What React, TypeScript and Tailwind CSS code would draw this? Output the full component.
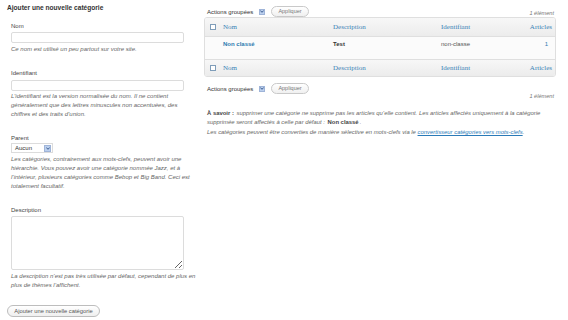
import React from 'react';

const sans = "font-['Liberation_Sans',Arial,sans-serif]";
const serif = "font-['Liberation_Serif','Times_New_Roman',serif]";

function Chevron() {
  return (
    <svg width="4" height="3" viewBox="0 0 4 3" className="block">
      <path d="M0.3 0.5 L2 2.3 L3.7 0.5" fill="none" stroke="#2b4f86" strokeWidth="0.9" />
    </svg>
  );
}

function CheckBox() {
  return <div className="w-[6px] h-[6px] border border-[#7f9db9] bg-white" />;
}

function BulkActions() {
  return (
    <div className="flex items-center">
      <div className="flex items-center w-[62px] h-[10px] pl-[3px] pr-[1px] justify-between">
        <span className="text-[6px] leading-[8px] text-[#333]">Actions groupées</span>
        <div className="w-[6px] h-[6px] bg-[#bcd0ee] border border-[#9fb4d8] flex items-center justify-center">
          <Chevron />
        </div>
      </div>
      <button className="ml-[5px] h-[11px] w-[38px] rounded-full border border-[#c9c9c9] bg-gradient-to-b from-white to-[#f0f0f0] text-[5.5px] leading-[9px] text-[#777]">
        Appliquer
      </button>
    </div>
  );
}

function HeaderRow({ h }: { h: string }) {
  return (
    <div className={`grid grid-cols-[14px_110px_108px_1fr_41px] items-center ${h} bg-gradient-to-b from-[#f7f7f7] to-[#ececec] ${serif} text-[7px] leading-[9px] text-[#3a84b7]`}>
      <div className="pl-[5px]">
        <CheckBox />
      </div>
      <div className="pl-[4px]">Nom</div>
      <div className="pl-[4px]">Description</div>
      <div className="pl-[4px]">Identifiant</div>
      <div className="pr-[3px] text-right">Articles</div>
    </div>
  );
}

export default function App() {
  return (
    <div className={`w-[568px] h-[320px] bg-white flex ${sans} overflow-hidden`}>
      {/* Left: add category form */}
      <div className="w-[201px] shrink-0 pl-[7px] pt-[3px]">
        <h3 className="text-[6.6px] leading-[9px] font-bold text-[#333]">Ajouter une nouvelle catégorie</h3>

        <div className="pl-[4px]">
          <label className="block mt-[10px] text-[6px] leading-[9px] text-[#444]">Nom</label>
          <input readOnly className="block mt-[1px] w-[173px] h-[11px] border border-[#dcdcdc] rounded-[2px] bg-white" />
          <p className="mt-[2px] text-[6px] leading-[9px] italic text-[#666]">Ce nom est utilisé un peu partout sur votre site.</p>

          <label className="block mt-[15px] text-[6px] leading-[9px] text-[#444]">Identifiant</label>
          <input readOnly className="block mt-[2px] w-[173px] h-[11px] border border-[#dcdcdc] rounded-[2px] bg-white" />
          <p className="mt-[1px] w-[180px] text-[6px] leading-[9px] italic text-[#666]">
            L’identifiant est la version normalisée du nom. Il ne contient généralement que des lettres minuscules non accentuées, des chiffres et des traits d’union.
          </p>

          <label className="block mt-[15px] text-[6px] leading-[9px] text-[#444]">Parent</label>
          <div className="flex items-center justify-between w-[42px] h-[10px] border border-[#dcdcdc] bg-white pl-[3px] pr-[1px]">
            <span className="text-[6px] leading-[8px] text-[#333]">Aucun</span>
            <div className="w-[7px] h-[7px] bg-[#bcd0ee] border border-[#9fb4d8] flex items-center justify-center">
              <Chevron />
            </div>
          </div>
          <p className="mt-[2px] w-[186px] text-[6px] leading-[9px] italic text-[#666]">
            Les catégories, contrairement aux mots-clefs, peuvent avoir une hiérarchie. Vous pouvez avoir une catégorie nommée Jazz, et à l’intérieur, plusieurs catégories comme Bebop et Big Band. Ceci est totalement facultatif.
          </p>

          <label className="block mt-[15px] text-[6px] leading-[9px] text-[#444]">Description</label>
          <textarea readOnly className="block mt-[1px] w-[173px] h-[54px] border border-[#dcdcdc] rounded-[2px] bg-white" />
          <p className="mt-[2px] w-[186px] text-[6px] leading-[9px] italic text-[#666]">
            La description n’est pas très utilisée par défaut, cependant de plus en plus de thèmes l’affichent.
          </p>
        </div>

        <button className="mt-[15px] h-[12px] w-[93px] rounded-full border border-[#bdbdbd] bg-gradient-to-b from-white to-[#efefef] text-[5.8px] leading-[10px] text-[#555]">
          Ajouter une nouvelle catégorie
        </button>
      </div>

      {/* Right: categories list */}
      <div className="flex-1 pl-[3px] pr-[12px] pt-[2px]">
        <div className="flex justify-between items-end h-[15px]">
          <BulkActions />
          <span className="text-[5.6px] leading-[7px] italic text-[#777] pr-[2px]">1 élément</span>
        </div>

        <div className="border border-[#dfdfdf] rounded-[3px] overflow-hidden">
          <HeaderRow h="h-[18px]" />
          <div className="grid grid-cols-[14px_110px_108px_1fr_41px] h-[24px] bg-[#fbfbfb] border-y border-[#dfdfdf] pt-[3px] text-[6px] leading-[9px]">
            <div />
            <div className="pl-[4px] font-bold text-[#2f7bb0]">Non classé</div>
            <div className="pl-[4px] font-bold text-[#333]">Test</div>
            <div className="pl-[4px] text-[#555]">non-classe</div>
            <div className="pr-[7px] text-right text-[#2f7bb0]">1</div>
          </div>
          <HeaderRow h="h-[16px]" />
        </div>

        <div className="flex justify-between items-start mt-[6px] h-[16px]">
          <BulkActions />
          <span className="mt-[10px] text-[5.6px] leading-[7px] italic text-[#777] pr-[2px]">1 élément</span>
        </div>

        <div className="pl-[3px] mt-[10px] text-[5.9px] leading-[9px] italic text-[#666]">
          <p>
            <span className="not-italic font-bold text-[#444] mr-[1px]">À savoir :</span> supprimer une catégorie ne supprime pas les articles qu’elle contient. Les articles affectés uniquement à la catégorie supprimée seront affectés à celle par défaut :{' '}
            <span className="not-italic font-bold text-[#444] ml-[1px] mr-[1px]">Non classé</span>.
          </p>
          <p className="mt-[1px]">
            Les catégories peuvent être converties de manière sélective en mots-clefs via le{' '}
            <a className="text-[#2a7ab8] underline">convertisseur catégories vers mots-clefs</a>.
          </p>
        </div>
      </div>
    </div>
  );
}
